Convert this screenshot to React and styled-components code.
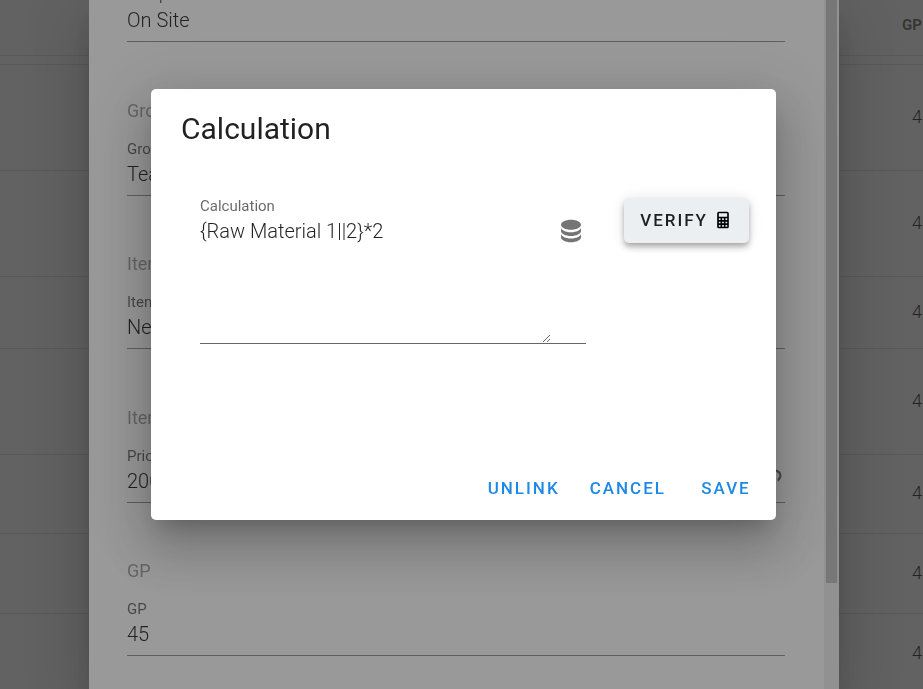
import React, { useState } from 'react';
import styled, { createGlobalStyle } from 'styled-components';

const GlobalStyle = createGlobalStyle`
  * {
    box-sizing: border-box;
  }
  body {
    margin: 0;
    overflow: hidden;
    font-family: Roboto, "Liberation Sans", sans-serif;
    color: rgba(0, 0, 0, 0.87);
    background: #fff;
  }
`;
const Page = styled.main`
  height: 100vh;
  overflow: hidden;
`;
const PriceTable = styled.table`
  width: 100%;
  table-layout: fixed;
  border-collapse: collapse;
  font-size: 18px;
  font-weight: 300;
`;
const HeadCell = styled.th`
  height: 55px;
  padding: 0 1px 4px 0;
  border-bottom: 1px solid rgba(0, 0, 0, 0.12);
  color: rgba(0, 0, 0, 0.6);
  font-size: 15px;
  font-weight: 700;
  text-align: right;
`;
const Cell = styled.td`
  height: ${(props) => props.$height}px;
  padding: 0 1px 2px 0;
  border-bottom: 1px solid rgba(0, 0, 0, 0.12);
  text-align: right;
`;
const Overlay = styled.div`
  position: fixed;
  inset: 0;
  display: flex;
  align-items: stretch;
  justify-content: center;
  padding-left: 5px;
  background: rgba(33, 33, 33, 0.46);
`;
const TopOverlay = styled(Overlay)`
  align-items: center;
  padding: 0 0 80px 4px;
`;
const Dialog = styled.section`
  width: ${(props) => props.$width}px;
  max-width: 100%;
  border-radius: 5px;
  background: #fff;
  box-shadow: 0 14px 19px -9px rgba(0, 0, 0, 0.2), 0 30px 48px 4px rgba(0, 0, 0, 0.14),
    0 11px 58px 10px rgba(0, 0, 0, 0.12);
`;
const ItemDialog = styled(Dialog)`
  display: flex;
  overflow: hidden;
  border-radius: 0;
`;
const ItemForm = styled.form`
  flex: 1;
  padding: 0 39px 0 38px;
`;
const Scrollbar = styled.div`
  width: 15px;
  padding: 0 2px;
  background: #f1f1f1;
`;
const ScrollThumb = styled.div`
  height: 583px;
  background: #c1c1c1;
`;
const FirstField = styled.div`
  height: 42px;
  display: flex;
  flex-direction: column;
  justify-content: flex-end;
`;
const Groups = styled.div`
  display: grid;
  grid-template-rows: repeat(4, 1fr);
  height: 614px;
`;
const Group = styled.div`
  display: flex;
  flex-direction: column;
  justify-content: flex-end;
`;
const GroupTitle = styled.div`
  margin-bottom: 16px;
  color: rgba(0, 0, 0, 0.38);
  font-size: 18px;
  line-height: 24px;
`;
const Label = styled.label`
  display: block;
  color: rgba(0, 0, 0, 0.6);
  font-size: 15px;
  line-height: 20px;
`;
const FieldRow = styled.div`
  display: flex;
  align-items: flex-start;
  height: 37px;
  border-bottom: 1px solid rgba(0, 0, 0, 0.42);
`;
const Input = styled.input`
  flex: 1;
  min-width: 0;
  height: 36px;
  padding: 0 0 6px;
  border: none;
  outline: none;
  background: transparent;
  color: inherit;
  font-family: inherit;
  font-size: 20px;
  font-weight: 300;
`;
const Title = styled.h2`
  margin: 0;
  padding: 20px 30px;
  font-size: 30px;
  font-weight: 400;
  line-height: 40px;
`;
const Content = styled.div`
  display: flex;
  align-items: flex-start;
  gap: 38px;
  height: 294px;
  padding: 27px 27px 0 49px;
`;
const CalculationField = styled.div`
  flex: 1;
`;
const TextRow = styled.div`
  display: flex;
  align-items: flex-start;
  justify-content: space-between;
  border-bottom: 1px solid rgba(0, 0, 0, 0.6);
`;
const TextArea = styled.textarea`
  width: 351px;
  height: 127px;
  padding: 0;
  border: none;
  outline: none;
  background: transparent;
  color: inherit;
  font-family: inherit;
  font-size: 20px;
  font-weight: 300;
  line-height: 30px;
`;
const IconButton = styled.button`
  display: flex;
  padding: 0;
  border: none;
  background: none;
  color: rgba(0, 0, 0, 0.54);
`;
const Button = styled.button`
  display: flex;
  align-items: center;
  justify-content: center;
  min-width: 80px;
  height: 45px;
  padding: 0 10px;
  border: none;
  border-radius: 5px;
  background: none;
  color: #1e88e5;
  font-family: inherit;
  font-size: 17px;
  font-weight: 500;
  letter-spacing: 2px;
  text-transform: uppercase;
`;
const VerifyButton = styled(Button)`
  gap: 5px;
  margin-top: 2px;
  padding: 0 16px 2px;
  background: #eceff1;
  color: rgba(0, 0, 0, 0.87);
  box-shadow: 0 3px 5px -1px rgba(0, 0, 0, 0.2), 0 5px 6px 0 rgba(0, 0, 0, 0.14),
    0 1px 13px 0 rgba(0, 0, 0, 0.12);
`;
const Actions = styled.div`
  display: flex;
  justify-content: flex-end;
  gap: 10px;
  padding: 2px 10px 10px;
`;

const rows = [106, 106, 72, 106, 79, 80, 80];
const groups = [
  { title: 'Group', label: 'Group', value: 'Team' },
  { title: 'Item', label: 'Item', value: 'New' },
  { title: 'Item Price', label: 'Price', value: '200', linked: true },
  { title: 'GP', label: 'GP', value: '45' },
];
const icons = {
  database:
    'M12 3C7.58 3 4 4.79 4 7s3.58 4 8 4 8-1.79 8-4-3.58-4-8-4M4 9v3c0 2.21 3.58 4 8 4s8-1.79 8-4V9c0 2.21-3.58 4-8 4s-8-1.79-8-4m0 5v3c0 2.21 3.58 4 8 4s8-1.79 8-4v-3c0 2.21-3.58 4-8 4s-8-1.79-8-4z',
  calculator:
    'M7 2h10a2 2 0 0 1 2 2v16a2 2 0 0 1-2 2H7a2 2 0 0 1-2-2V4a2 2 0 0 1 2-2m0 2v4h10V4H7m0 6v2h2v-2H7m4 0v2h2v-2h-2m4 0v2h2v-2h-2m-8 4v2h2v-2H7m4 0v2h2v-2h-2m4 0v2h2v-2h-2m-8 4v2h2v-2H7m4 0v2h2v-2h-2m4 0v2h2v-2h-2z',
  link:
    'M10.59 13.41c.41.39.41 1.03 0 1.42-.39.39-1.03.39-1.42 0a5.003 5.003 0 0 1 0-7.07l3.54-3.54a5.003 5.003 0 0 1 7.07 0 5.003 5.003 0 0 1 0 7.07l-1.49 1.49c.01-.82-.12-1.64-.4-2.42l.47-.48a2.982 2.982 0 0 0 0-4.24 2.982 2.982 0 0 0-4.24 0l-3.53 3.53a2.982 2.982 0 0 0 0 4.24z',
};

function Icon({ name, size, color = 'currentColor' }) {
  return (
    <svg width={size} height={size} viewBox="0 0 24 24" fill={color} fillRule="evenodd" aria-hidden="true">
      <path d={icons[name]} />
    </svg>
  );
}

export default function App() {
  const [calculation, setCalculation] = useState('{Raw Material 1||2}*2');
  return (
    <>
      <GlobalStyle />
      <Page>
        <PriceTable>
          <thead>
            <tr>
              <HeadCell>GP</HeadCell>
            </tr>
            <tr>
              <Cell $height={9} />
            </tr>
          </thead>
          <tbody>
            {rows.map((height, index) => (
              <tr key={index}>
                <Cell $height={height}>4</Cell>
              </tr>
            ))}
          </tbody>
        </PriceTable>
      </Page>
      <Overlay>
        <ItemDialog $width={750}>
          <ItemForm>
            <FirstField>
              <Label htmlFor="type">Group</Label>
              <FieldRow>
                <Input id="type" defaultValue="On Site" />
              </FieldRow>
            </FirstField>
            <Groups>
              {groups.map((group, index) => (
                <Group key={index}>
                  <GroupTitle>{group.title}</GroupTitle>
                  <Label htmlFor={`group-${index}`}>{group.label}</Label>
                  <FieldRow>
                    <Input id={`group-${index}`} defaultValue={group.value} />
                    {group.linked && (
                      <IconButton type="button" aria-label="Link">
                        <Icon name="link" size={30} />
                      </IconButton>
                    )}
                  </FieldRow>
                </Group>
              ))}
            </Groups>
          </ItemForm>
          <Scrollbar>
            <ScrollThumb />
          </Scrollbar>
        </ItemDialog>
      </Overlay>
      <TopOverlay>
        <Dialog $width={625} role="dialog" aria-labelledby="dialog-title">
          <Title id="dialog-title">Calculation</Title>
          <Content>
            <CalculationField>
              <Label htmlFor="calculation">Calculation</Label>
              <TextRow>
                <TextArea
                  id="calculation"
                  value={calculation}
                  onChange={(e) => setCalculation(e.target.value)}
                />
                <IconButton type="button" aria-label="Fields">
                  <Icon name="database" size={30} />
                </IconButton>
              </TextRow>
            </CalculationField>
            <VerifyButton type="button">
              Verify
              <Icon name="calculator" size={20} color="#000" />
            </VerifyButton>
          </Content>
          <Actions>
            <Button type="button">Unlink</Button>
            <Button type="button">Cancel</Button>
            <Button type="button">Save</Button>
          </Actions>
        </Dialog>
      </TopOverlay>
    </>
  );
}
